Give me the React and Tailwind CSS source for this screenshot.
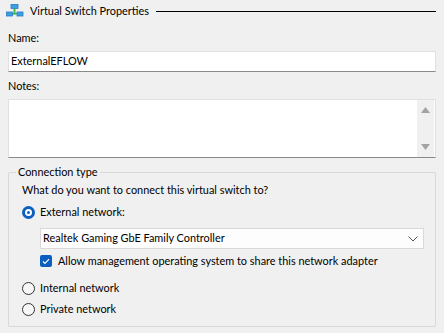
import React from "react";

const font = { fontFamily: 'Lato, "Noto Sans", sans-serif' };

function NetIcon() {
  return (
    <svg width="18" height="14" viewBox="0 0 18 14">
      <rect x="5" y="0.5" width="7" height="4" fill="#3aa0e8" stroke="#2a7cc0" strokeWidth="0.8" />
      <rect x="7.5" y="4.5" width="2" height="6" fill="#3bb84a" />
      <rect x="3" y="9" width="11" height="1.4" fill="#3bb84a" />
      <rect x="0.5" y="8" width="6" height="4" fill="#3aa0e8" stroke="#2a7cc0" strokeWidth="0.8" />
      <rect x="11" y="8" width="6" height="4" fill="#3aa0e8" stroke="#2a7cc0" strokeWidth="0.8" />
    </svg>
  );
}

function Radio({ checked }) {
  if (checked)
    return (
      <span className="w-[13px] h-[13px] rounded-full bg-[#0a5fc0] flex items-center justify-center shrink-0">
        <span className="w-[7px] h-[7px] rounded-full bg-white flex items-center justify-center">
          <span className="w-[3px] h-[3px] rounded-full bg-[#0a5fc0]" />
        </span>
      </span>
    );
  return <span className="w-[13px] h-[13px] rounded-full border border-[#333] bg-[#f7f7f7] shrink-0" />;
}

export default function App() {
  return (
    <div className="w-[444px] h-[333px] bg-[#f0f0f0] text-[10.9px] text-black overflow-hidden relative" style={font}>
      {/* header */}
      <div className="flex items-center h-[22px] pl-[6px] pr-[8px]">
        <NetIcon />
        <span className="ml-[6px] whitespace-nowrap">Virtual Switch Properties</span>
        <div className="flex-1 h-px bg-black ml-[7px]" />
      </div>

      <div className="px-[8px]">
        <div className="mt-[8px] leading-[16px]">Name:</div>
        <div className="mt-[5px] h-[21px] bg-white border border-[#e0e0e0] border-b-[#8a8a8a] flex items-center pl-[2px]">
          ExternalEFLOW
        </div>

        <div className="mt-[6px] leading-[16px]">Notes:</div>
        <div className="mt-[5px] h-[59px] bg-white border border-[#e0e0e0] border-b-[#8a8a8a] flex justify-end">
          <div className="w-[17px] bg-[#f0f0f0] flex flex-col items-center justify-between py-[7px] mr-px">
            <svg width="9" height="6" viewBox="0 0 9 6"><path d="M4.5 0L9 6H0z" fill="#a3a3a3" /></svg>
            <svg width="9" height="6" viewBox="0 0 9 6"><path d="M0 0H9L4.5 6z" fill="#a3a3a3" /></svg>
          </div>
        </div>

        {/* group box */}
        <div className="relative mt-[14px] h-[155px] border border-[#d8d8d8] rounded-[2px]">
          <span className="absolute -top-[9px] left-[7px] bg-[#f0f0f0] px-[2px] leading-[16px]">Connection type</span>
          <div className="pl-[13px] pr-[11px]">
            <div className="mt-[9px] leading-[16px] whitespace-nowrap">What do you want to connect this virtual switch to?</div>
            <div className="mt-[6px] flex items-center h-[16px]">
              <Radio checked />
              <span className="ml-[5px]">External network:</span>
            </div>
            <div className="mt-[8px] ml-[18px] h-[21px] bg-[#fdfdfd] border border-[#d9d9d9] flex items-center justify-between pl-[2px] pr-[5px]">
              <span>Realtek Gaming GbE Family Controller</span>
              <svg width="10" height="6" viewBox="0 0 10 6"><path d="M0.5 0.5L5 5L9.5 0.5" fill="none" stroke="#555" strokeWidth="1" /></svg>
            </div>
            <div className="mt-[4px] ml-[18px] flex items-center h-[16px]">
              <span className="w-[12px] h-[12px] rounded-[2px] bg-[#0a5fc0] flex items-center justify-center shrink-0">
                <svg width="8" height="7" viewBox="0 0 8 7"><path d="M1 3.5L3 5.5L7 1.2" fill="none" stroke="white" strokeWidth="1.2" /></svg>
              </span>
              <span className="ml-[6px] whitespace-nowrap">Allow management operating system to share this network adapter</span>
            </div>
            <div className="mt-[11px] flex items-center h-[16px]">
              <Radio />
              <span className="ml-[5px]">Internal network</span>
            </div>
            <div className="mt-[5px] flex items-center h-[16px]">
              <Radio />
              <span className="ml-[5px]">Private network</span>
            </div>
          </div>
        </div>
      </div>
    </div>
  );
}
